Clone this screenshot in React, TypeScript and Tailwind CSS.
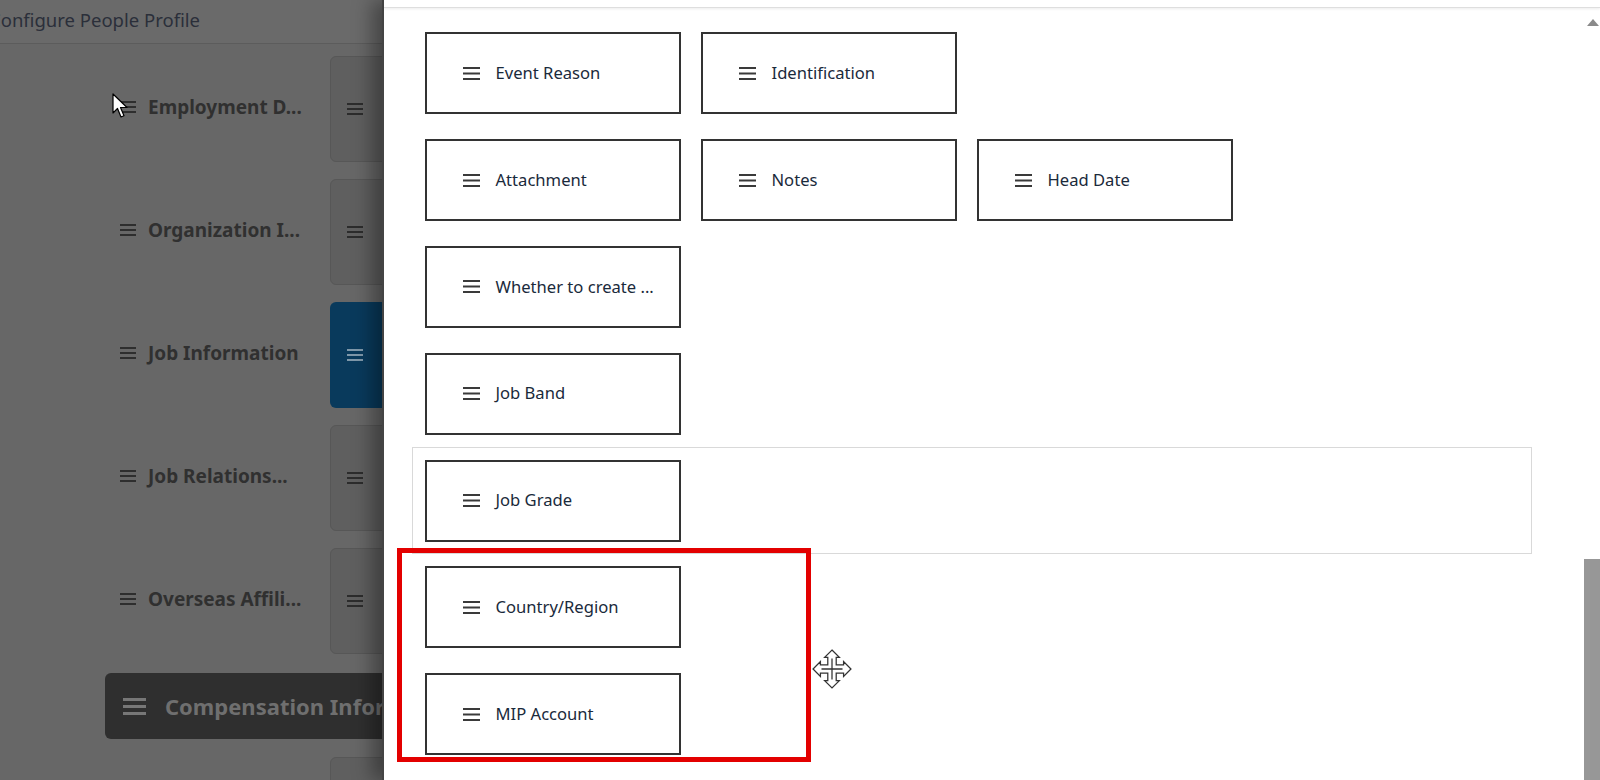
import React from "react"

type BarsProps = {
  w: number
  h: number
  t: number
  color: string
}

const Bars = ({ w, h, t, color }: BarsProps) => (
  <svg width={w} height={h} viewBox={`0 0 ${w} ${h}`} className="shrink-0">
    <rect x={0} y={0} width={w} height={t} fill={color} />
    <rect x={0} y={(h - t) / 2} width={w} height={t} fill={color} />
    <rect x={0} y={h - t} width={w} height={t} fill={color} />
  </svg>
)

const sideRows = [
  { label: "Employment D...", blue: false },
  { label: "Organization I...", blue: false },
  { label: "Job Information", blue: true },
  { label: "Job Relations...", blue: false },
  { label: "Overseas Affili...", blue: false },
]

const cardRows: { items: string[]; target?: boolean }[] = [
  { items: ["Event Reason", "Identification"] },
  { items: ["Attachment", "Notes", "Head Date"] },
  { items: ["Whether to create ..."] },
  { items: ["Job Band"] },
  { items: ["Job Grade"], target: true },
  { items: ["Country/Region"] },
  { items: ["MIP Account"] },
]

const SideTile = ({ blue }: { blue?: boolean }) => (
  <div
    className={
      blue
        ? "flex h-[106px] w-[60px] shrink-0 items-center rounded-[6px] bg-[#093a5c] pl-[17px]"
        : "flex h-[106px] w-[60px] shrink-0 items-center rounded-[6px] border border-[#575757] bg-[#5f5f5f] pl-[16px]"
    }>
    <Bars w={16} h={12} t={2} color={blue ? "#7f98aa" : "#2c2c2c"} />
  </div>
)

const FieldCard = ({ label }: { label: string }) => (
  <div className="flex h-[82px] w-[256px] shrink-0 items-center border-2 border-[#333] bg-white pl-[36px]">
    <Bars w={17} h={13} t={2} color="#3a3a3a" />
    <span className="ml-[16px] text-[16.6px] text-[#1a2a3b]">{label}</span>
  </div>
)

const ArrowCursor = () => (
  <svg width="18" height="26" viewBox="0 0 18 26" className="absolute left-[112px] top-[93px]">
    <path
      d="M1 1 L1 20 L5.5 15.5 L9 24 L12 22.8 L8.5 14.5 L15 14.5 Z"
      fill="#fff"
      stroke="#000"
      strokeWidth="1.2"
      strokeLinejoin="round"
    />
  </svg>
)

const MoveCursor = () => (
  <svg width="40" height="40" viewBox="0 0 38 38" className="absolute left-[812px] top-[649px]">
    <path
      d="M19 1 L26 8 L23 8 L23 15 L30 15 L30 12 L37 19 L30 26 L30 23 L23 23 L23 30 L26 30 L19 37 L12 30 L15 30 L15 23 L8 23 L8 26 L1 19 L8 12 L8 15 L15 15 L15 8 L12 8 Z"
      fill="#fff"
      stroke="#333"
      strokeWidth="1.2"
      strokeLinejoin="miter"
    />
    <path d="M19 9 L19 29 M9 19 L29 19" stroke="#333" strokeWidth="1.2" />
  </svg>
)

export default function App() {
  return (
    <div
      className="relative flex h-[780px] w-[1600px] overflow-hidden bg-white"
      style={{ fontFamily: '"Noto Sans", "Liberation Sans", sans-serif' }}>
      {/* dimmed page behind the dialog */}
      <div className="relative flex w-[382px] shrink-0 flex-col overflow-hidden bg-[#676767]">
        <div className="flex h-[44px] shrink-0 items-center border-b border-[#5c5c5c] bg-[#6a6a6a] pb-[4px]">
          <span className="ml-[-11px] whitespace-nowrap text-[18.5px] text-[#2b2f3a]">
            Configure People Profile
          </span>
        </div>

        <div className="flex flex-col pt-[12px]">
          {sideRows.map(row => (
            <div key={row.label} className="mb-[17px] flex items-center">
              <div className="flex w-[330px] shrink-0 items-center gap-[12px] pb-[4px] pl-[120px]">
                <Bars w={16} h={12} t={2} color="#2e2e2e" />
                <span className="whitespace-nowrap text-[19px] font-bold text-[#303030]">
                  {row.label}
                </span>
              </div>
              <SideTile blue={row.blue} />
            </div>
          ))}

          <div className="ml-[105px] mt-[2px] flex h-[66px] w-[320px] shrink-0 items-center rounded-[6px] bg-[#2f2f2f] pl-[18px]">
            <Bars w={23} h={17} t={3} color="#777" />
            <span className="ml-[19px] whitespace-nowrap text-[22px] font-bold text-[#6f6f6f]">
              Compensation Information
            </span>
          </div>

          <div className="ml-[330px] mt-[18px]">
            <SideTile />
          </div>
        </div>
        <ArrowCursor />
      </div>

      {/* dialog panel */}
      <div className="relative z-10 flex flex-1 flex-col border-l-2 border-[#444] bg-white shadow-[-10px_0_18px_rgba(0,0,0,0.35)]">
        <div className="h-[8px] shrink-0 border-b border-[#dedede] shadow-[0_1px_3px_rgba(0,0,0,0.08)]" />
        <div className="flex flex-1">
          <div className="flex-1 pt-[12px]">
            <div className="ml-[28px] flex w-[1120px] flex-col">
              {cardRows.map((row, i) => (
                <div
                  key={i}
                  className={
                    row.target
                      ? "flex gap-[20px] border border-[#d9d9d9] px-[11.5px] py-[11.4px]"
                      : "flex gap-[20px] border border-transparent px-[11.5px] py-[11.4px]"
                  }>
                  {row.items.map(item => (
                    <FieldCard key={item} label={item} />
                  ))}
                </div>
              ))}
            </div>
          </div>
          <div className="flex w-[16px] shrink-0 flex-col items-end">
            <div className="mr-[1px] mt-[11px] h-0 w-0 border-x-[6px] border-b-[7px] border-x-transparent border-b-[#8a8a8a]" />
            <div className="flex-1" />
            <div className="h-[221px] w-[16px] bg-[#979797]" />
          </div>
        </div>
      </div>

      {/* annotation */}
      <div className="pointer-events-none absolute left-[397px] top-[548px] z-20 h-[214px] w-[414px] border-[5px] border-[#e30000]" />
      <div className="pointer-events-none absolute inset-0 z-30">
        <MoveCursor />
      </div>
    </div>
  )
}
